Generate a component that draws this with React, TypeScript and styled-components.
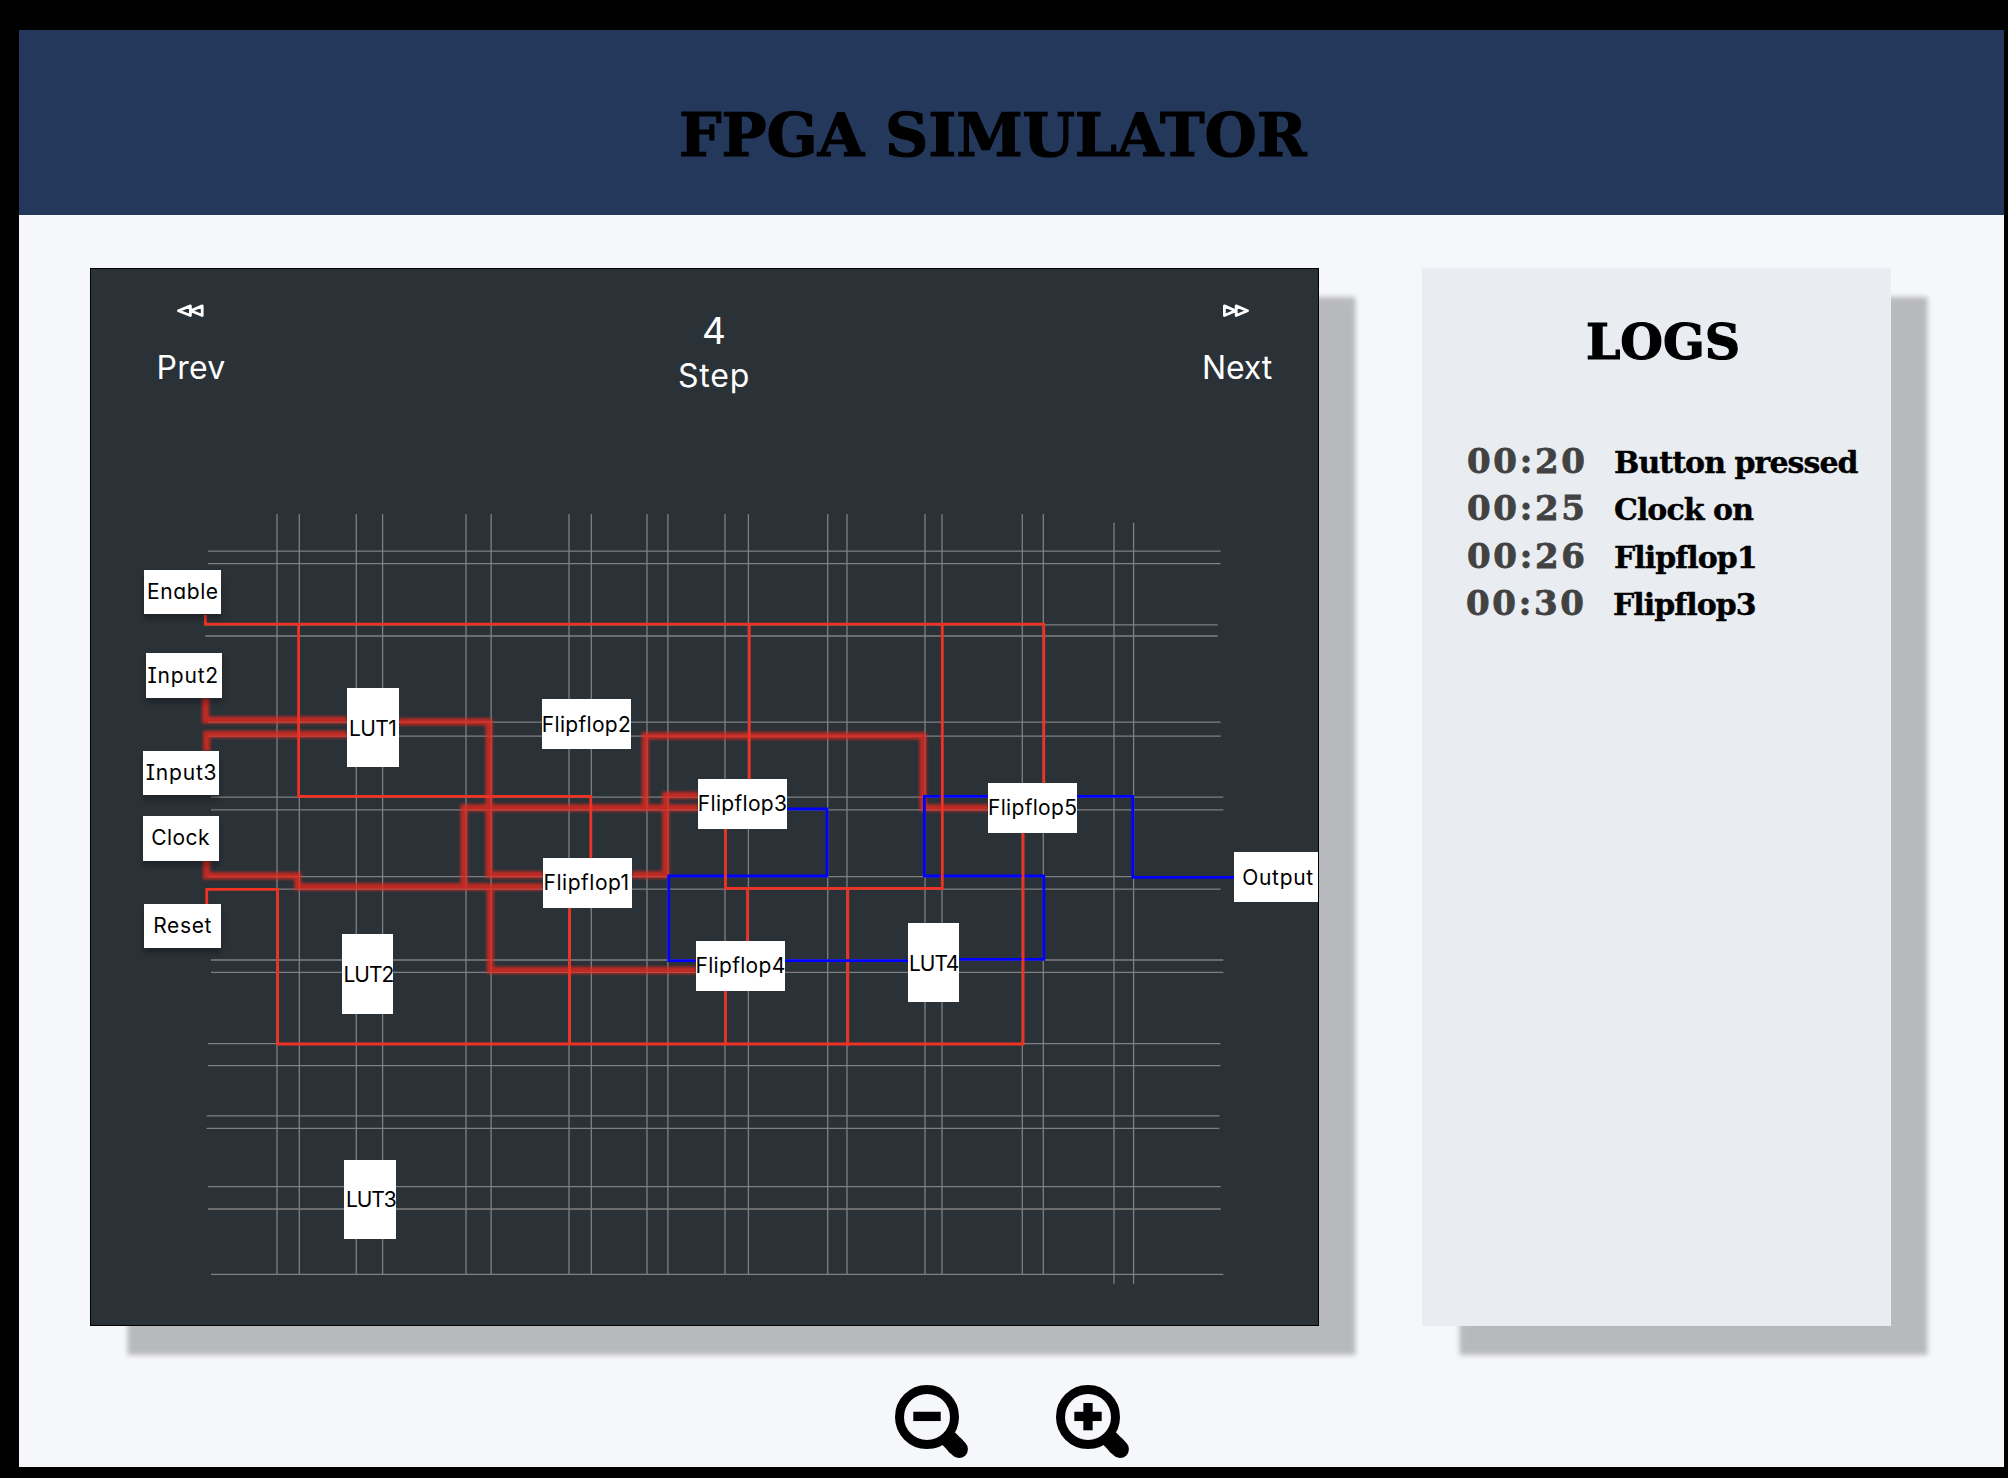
import React from "react";
import styled, { createGlobalStyle } from "styled-components";

const GlobalStyle = createGlobalStyle`
  * { box-sizing: border-box; }
  html, body { margin: 0; padding: 0; background: #000; }
`;

const serif = `"DejaVu Serif", "Liberation Serif", serif`;
const sans = `Inter, "Noto Sans", sans-serif`;

const Window = styled.div`
  width: 2008px;
  height: 1478px;
  padding: 30px 4.5px 11px 19px;
  background: #000;
  display: flex;
  flex-direction: column;
  overflow: hidden;
`;

const Header = styled.header`
  height: 185px;
  flex: none;
  display: flex;
  justify-content: center;
  align-items: center;
  background: #24385b;
  padding: 25px 37px 0 0;
`;

const Title = styled.h1<{ $size: number }>`
  margin: 0;
  font: 700 ${(p) => p.$size}px/1 ${serif};
  -webkit-text-stroke: 1.2px #000;
  letter-spacing: -0.1px;
  white-space: nowrap;
  color: #000;
`;

const Page = styled.main`
  flex: 1;
  display: flex;
  flex-direction: column;
  background: #f6f7fb;
  padding: 53px 0 0 71px;
`;

const Panels = styled.div`
  display: flex;
  gap: 103px;
`;

const Simulator = styled.section`
  width: 1229px;
  height: 1058px;
  border: 1px solid #000;
  background: #2a3137;
  box-shadow: 37.4px 29px 5px rgba(0, 0, 0, 0.25);
  display: flex;
  flex-direction: column;
`;

const Controls = styled.div`
  height: 211px;
  flex: none;
  display: flex;
  justify-content: space-between;
  align-items: flex-start;
  padding: 33px 44px 0 63px;
  color: #fff;
`;

const Control = styled.button<{ $gap: number; $drop?: number }>`
  border: 0;
  padding: ${(p) => p.$drop ?? 0}px 0 0;
  background: none;
  color: inherit;
  width: 74px;
  display: flex;
  flex-direction: column;
  align-items: center;
  gap: ${(p) => p.$gap}px;
`;

const ControlText = styled.span<{ $size: number; $spacing?: number }>`
  font: 400 ${(p) => p.$size}px/36px ${sans};
  font-feature-settings: "cv08", "cv11";
  letter-spacing: ${(p) => p.$spacing ?? 0}px;
  white-space: nowrap;
`;

const Canvas = styled.div`
  position: relative;
  flex: 1;
`;

const Wires = styled.svg`
  display: block;
`;

const NodeBox = styled.div<{
  $x: number; $y: number; $w: number; $h: number;
  $tx: number; $base: number; $spacing: number; $raised?: boolean;
}>`
  position: absolute;
  left: ${(p) => p.$x - 91}px;
  top: ${(p) => p.$y - 480}px;
  width: ${(p) => p.$w}px;
  height: ${(p) => p.$h}px;
  padding-top: ${(p) => p.$base - p.$y - 17.6}px;
  text-indent: ${(p) => p.$tx - p.$x}px;
  background: #fff;
  box-shadow: ${(p) => (p.$raised ? "0 5px 5px rgba(0, 0, 0, 0.25)" : "none")};
  font: 400 21px/20px ${sans};
  font-feature-settings: "cv08", "cv11";
  letter-spacing: ${(p) => p.$spacing}px;
  white-space: nowrap;
  color: #000;
`;

const Logs = styled.section`
  width: 469px;
  height: 1058px;
  background: #e9ecf1;
  box-shadow: 37.4px 29px 5px rgba(0, 0, 0, 0.25);
  display: flex;
  flex-direction: column;
`;

const LogsHead = styled.div`
  padding: 50px 0 0 13px;
  height: 170px;
  display: flex;
  justify-content: center;
`;

const LogRow = styled.div<{ $shift?: number }>`
  height: 47.4px;
  display: grid;
  grid-template-columns: 147px 1fr;
  align-items: baseline;
  padding-left: ${(p) => 45 - (p.$shift ?? 0)}px;
  font: 700 30px/47px ${serif};
  white-space: nowrap;
`;

const LogTime = styled.span`
  font-size: 34px;
  letter-spacing: 2.7px;
  -webkit-text-stroke: 0.8px #424242;
  color: #424242;
`;

const LogText = styled.span`
  letter-spacing: -0.95px;
  -webkit-text-stroke: 0.4px #000;
  color: #000;
`;

const Zooms = styled.div`
  display: flex;
  gap: 86.6px;
  padding: 59px 0 0 805px;
`;

const ZoomButton = styled.button`
  border: 0;
  padding: 0;
  background: none;
  width: 74px;
  height: 75px;
  svg { display: block; }
`;

const Rewind = ({ forward }: { forward?: boolean }) => (
  <svg width="30" height="16" viewBox="0 0 30 16" fill="none" stroke="#fff" strokeWidth="2.8" strokeLinejoin="round">
    {forward ? (
      <path d="M2.4 3.9V13.5L13.6 8.7ZM14.2 3.9V13.5L25.6 8.7Z" />
    ) : (
      <path d="M14.4 3.9V13.5L2.4 8.7ZM26.2 3.9V13.5L14.8 8.7Z" />
    )}
  </svg>
);

const Glass = ({ plus }: { plus?: boolean }) => (
  <svg width="74" height="75" viewBox="0 0 74 75" fill="none" stroke="#000">
    <circle cx="32" cy="32" r="27.5" strokeWidth="9" />
    <path d="M51.5 51.5L58 58" strokeWidth="17.8" />
    <path d="M60 60L64 64.2" strokeWidth="17.8" strokeLinecap="round" />
    <path d="M58 58L62 62.5" strokeWidth="17.8" />
    <path d="M18.3 31.4H45.7" strokeWidth="9.3" />
    {plus && <path d="M32 18V45.3" strokeWidth="9.3" />}
  </svg>
);

const columns: [number, number, number][] = [
  277, 299.3, 356.3, 382.6, 466, 491.1, 569, 591.3, 647, 667.9, 725, 748.4, 827.7, 847,
  925, 942, 1022.3, 1043.3,
].map((x) => [x, 514, 1274] as [number, number, number]);
columns.push([1114, 522.7, 1283.7], [1133.6, 522.7, 1283.7]);

const rows: [number, number, number][] = [
  [551.2, 208, 1220.7], [563.7, 208, 1220.7],
  [624.8, 205.3, 1217.7], [636, 205.3, 1217.7],
  [722.2, 208, 1220.7], [736.2, 208, 1220.7],
  [797.2, 211, 1223.3], [809.8, 211, 1223.3],
  [876.6, 208, 1220.7], [889.1, 208, 1220.7],
  [960, 211, 1223.3], [972.3, 211, 1223.3],
  [1043.6, 208, 1220.5], [1065.7, 208, 1220.5],
  [1115.8, 206.7, 1219.3], [1128.3, 206.7, 1219.3],
  [1186.6, 208, 1220.7], [1209, 208, 1220.7],
  [1274.3, 211, 1223.3],
];

const active = [
  "M205.6 698V720H347",
  "M206.7 751V734.3H347",
  "M399 721.7H489V874.7H543",
  "M206.6 860V875.7H297.7V886.7H543",
  "M464 886.7V807.7H698",
  "M645.3 807.7V735.7H923V807.7H988",
  "M490.3 886.7V970.3H696",
  "M632 874.7H665.7V795.3H698",
];

const idle = [
  "M787 809H827V876H668.7V960.7H696",
  "M959 959.3H1043.8V876H924.4V796.3H988",
  "M1077 796.3H1132.8V877.3H1234.5",
];

const live = [
  "M205.4 615V624.2H1043.8V783",
  "M298.6 624.2V796.4H590.8V858",
  "M749.3 624.2V779",
  "M942.3 624.2V888.3H725.5V829",
  "M747.5 888.3V941",
  "M847.8 888.3V1046",
  "M206.7 904V889.4H277.6V1044H1023.1V833",
  "M569.6 908V1044",
  "M725.5 990V1044",
];

type NodeDef = { t: string; x: number; y: number; w: number; h: number; tx: number; base: number; s: number; r?: boolean };
const nodes: NodeDef[] = [
  { t: "Enable", x: 144, y: 570, w: 76.7, h: 44, tx: 147, base: 600, s: 0.6, r: true },
  { t: "Input2", x: 146, y: 653.3, w: 76, h: 44.7, tx: 147.5, base: 683.8, s: 0.8, r: true },
  { t: "Input3", x: 143, y: 751, w: 76, h: 44, tx: 145.8, base: 780.6, s: 0.8, r: true },
  { t: "Clock", x: 143, y: 816, w: 76, h: 44.5, tx: 151.3, base: 846, s: 0.4, r: true },
  { t: "Reset", x: 144, y: 904, w: 76.7, h: 44, tx: 153.3, base: 934, s: 0.6, r: true },
  { t: "LUT1", x: 347, y: 688, w: 51.7, h: 79, tx: 349, base: 736.4, s: -0.6 },
  { t: "LUT2", x: 342, y: 934, w: 51, h: 79.7, tx: 343.5, base: 982.5, s: -1 },
  { t: "LUT3", x: 344, y: 1160, w: 52, h: 79, tx: 346, base: 1207.7, s: -1.1 },
  { t: "LUT4", x: 908, y: 923.3, w: 51.2, h: 78.7, tx: 909, base: 971.6, s: -1 },
  { t: "Flipflop1", x: 543, y: 858, w: 89, h: 50, tx: 543.6, base: 890.8, s: 0.5 },
  { t: "Flipflop2", x: 542, y: 699, w: 89, h: 50, tx: 541.8, base: 732.2, s: 0.3 },
  { t: "Flipflop3", x: 698, y: 779, w: 89, h: 50, tx: 697.8, base: 812, s: 0.3 },
  { t: "Flipflop4", x: 696, y: 941, w: 89, h: 49.7, tx: 695.5, base: 974, s: 0.3 },
  { t: "Flipflop5", x: 988, y: 783, w: 89, h: 50, tx: 988, base: 815.6, s: 0.3 },
  { t: "Output", x: 1234.3, y: 852, w: 83.7, h: 50, tx: 1242.2, base: 885.4, s: 0.7 },
];

const logs: { time: string; text: string; shift?: number }[] = [
  { time: "00:20", text: "Button pressed" },
  { time: "00:25", text: "Clock on" },
  { time: "00:26", text: "Flipflop1" },
  { time: "00:30", text: "Flipflop3", shift: 1 },
];

export default function App() {
  return (
    <Window>
      <GlobalStyle />
      <Header>
        <Title $size={60}>FPGA SIMULATOR</Title>
      </Header>
      <Page>
        <Panels>
          <Simulator>
            <Controls>
              <Control $gap={31.5}>
                <Rewind />
                <ControlText $size={32} $spacing={0.3}>Prev</ControlText>
              </Control>
              <Control $gap={8.5} $drop={11}>
                <ControlText $size={37}>4</ControlText>
                <ControlText $size={32} $spacing={0.8}>Step</ControlText>
              </Control>
              <Control $gap={31.5}>
                <Rewind forward />
                <ControlText $size={32} $spacing={-0.2}>Next</ControlText>
              </Control>
            </Controls>
            <Canvas>
              <Wires width="1227" height="845" viewBox="91 480 1227 845" fill="none">
                <defs>
                  <filter id="glow" filterUnits="userSpaceOnUse" x="91" y="480" width="1227" height="845" colorInterpolationFilters="sRGB">
                    <feGaussianBlur stdDeviation="1.5" />
                  </filter>
                </defs>
                <g stroke="#808080" strokeWidth="1.3">
                  {rows.map(([y, a, b]) => <path key={y} d={`M${a} ${y}H${b}`} />)}
                  {columns.map(([x, a, b]) => <path key={x} d={`M${x} ${a}V${b}`} />)}
                </g>
                <g opacity="0.8">
                  <g stroke="#e6281e" strokeWidth="7" filter="url(#glow)">
                    {active.map((d) => <path key={d} d={d} />)}
                  </g>
                </g>
                <g stroke="#0000ff" strokeWidth="2.8">
                  {idle.map((d) => <path key={d} d={d} />)}
                </g>
                <g stroke="#ee3224" strokeWidth="2.8">
                  {live.map((d) => <path key={d} d={d} />)}
                </g>
                <path d="M785 960.7H908" stroke="#0000ff" strokeWidth="2.8" />
              </Wires>
              {nodes.map((n) => (
                <NodeBox key={n.t} $x={n.x} $y={n.y} $w={n.w} $h={n.h} $tx={n.tx} $base={n.base} $spacing={n.s} $raised={n.r}>
                  {n.t}
                </NodeBox>
              ))}
            </Canvas>
          </Simulator>
          <Logs>
            <LogsHead>
              <Title $size={49}>LOGS</Title>
            </LogsHead>
            {logs.map((l) => (
              <LogRow key={l.time} $shift={l.shift}>
                <LogTime>{l.time}</LogTime>
                <LogText>{l.text}</LogText>
              </LogRow>
            ))}
          </Logs>
        </Panels>
        <Zooms>
          <ZoomButton><Glass /></ZoomButton>
          <ZoomButton><Glass plus /></ZoomButton>
        </Zooms>
      </Page>
    </Window>
  );
}
